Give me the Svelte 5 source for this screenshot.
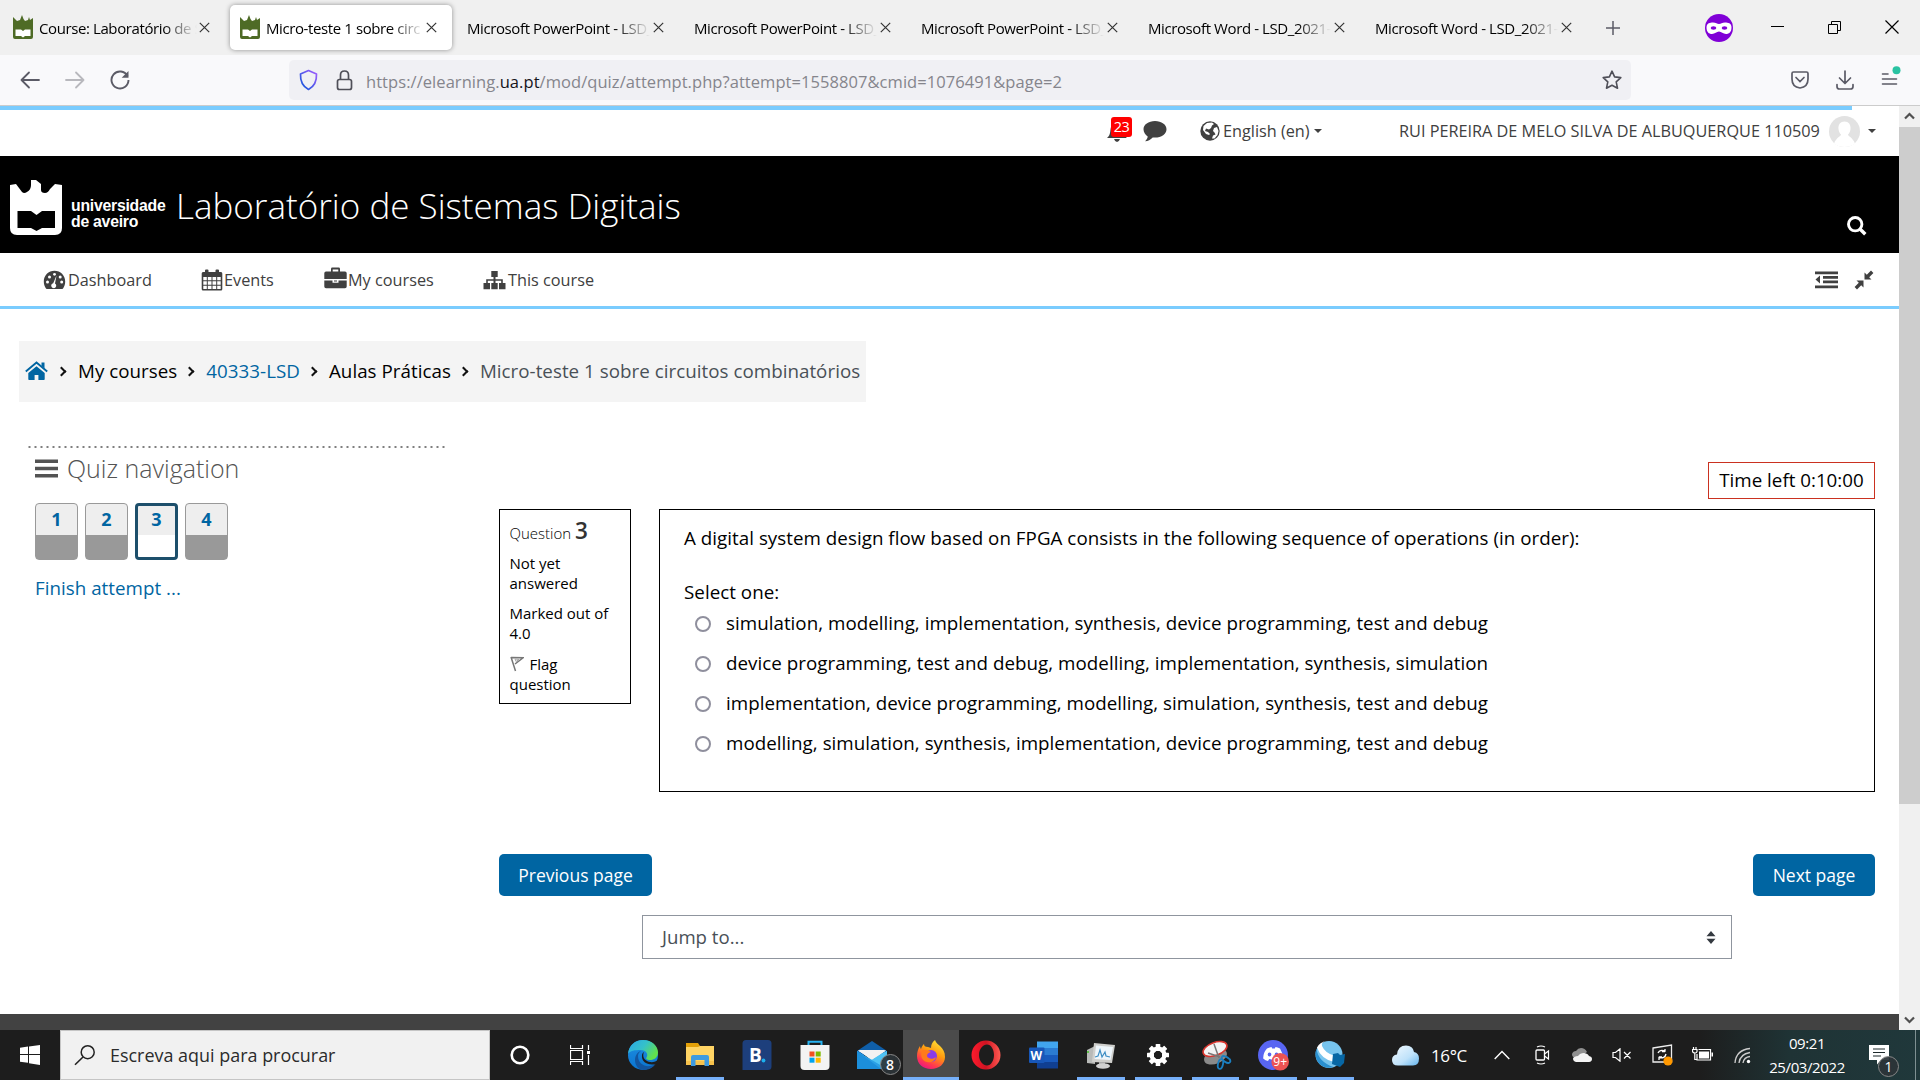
<script>
  const tabs = [
    { title: 'Course: Laboratório de S', fav: true },
    { title: 'Micro-teste 1 sobre circ', fav: true, active: true },
    { title: 'Microsoft PowerPoint - LSD_' },
    { title: 'Microsoft PowerPoint - LSD_' },
    { title: 'Microsoft PowerPoint - LSD_' },
    { title: 'Microsoft Word - LSD_2021-' },
    { title: 'Microsoft Word - LSD_2021-' }
  ];
  const options = [
    'simulation, modelling, implementation, synthesis, device programming, test and debug',
    'device programming, test and debug, modelling, implementation, synthesis, simulation',
    'implementation, device programming, modelling, simulation, synthesis, test and debug',
    'modelling, simulation, synthesis, implementation, device programming, test and debug'
  ];
  const pages = [1, 2, 3, 4];
  const current = 3;
  const apps = [
    { id: 'edge' }, { id: 'explorer', open: true }, { id: 'booking' }, { id: 'store' }, { id: 'mail' },
    { id: 'firefox', open: true, active: true }, { id: 'opera' }, { id: 'word' }, { id: 'monitor', open: true },
    { id: 'gear', open: true }, { id: 'snip', open: true }, { id: 'discord', open: true }, { id: 'thunder', open: true }
  ];
  const teeth = [0, 45, 90, 135, 180, 225, 270, 315];
</script>

{#snippet close()}
  <svg class="x" width="11" height="11" viewBox="0 0 11 11"><path d="M.8.8l9.4 9.4M10.2.8L.8 10.2" stroke="#333" stroke-width="1.2" fill="none" /></svg>
{/snippet}

{#snippet appIcon(id)}
  <svg width="32" height="32" viewBox="0 0 32 32">
    {#if id === 'edge'}
      <defs>
        <linearGradient id="eg1" x1="0" y1="0" x2="1" y2=".5"><stop offset="0" stop-color="#2aa7e8" /><stop offset=".55" stop-color="#35c1c9" /><stop offset="1" stop-color="#62e04c" /></linearGradient>
        <linearGradient id="eg2" x1="0" y1="0" x2="0" y2="1"><stop offset="0" stop-color="#1f8fe0" /><stop offset="1" stop-color="#0a74d0" /></linearGradient>
      </defs>
      <circle cx="16" cy="16" r="15" fill="url(#eg2)" />
      <path d="M1 15C2 6 8 1 16 1c9 0 15 6 15 12.500 0 5-4 7.500-8 7.500-3 0-4.500-1-3.500-2.500 2-3 0-7.500-6-7.500C8 11 3 11.500 1 15z" fill="url(#eg1)" />
      <path d="M11 17c0 7 6 11 12 10 3-.5 5-1.500 6-2.500C26 29 21 31 17 31 11 31 8 26 8 21c0-4 2-8 6-9-2 1-3 3-3 5z" fill="#12559f" />
      <path d="M17 13c-2 4 0 9 6 10 3 .5 6-.5 9-2.500v4l-3 .5c-8 2-15-2-14-9 .2-1.500 1-2.500 2-3z" fill="#1e1e1e" />
    {:else if id === 'explorer'}
      <path d="M2 4h12l2 3v4H2z" fill="#e3a008" /><path d="M2 8h12l2-1h14v18H2z" fill="#ffd464" />
      <path d="M2 22h28v4H2z" fill="#f7c24c" /><path d="M7 27V18q0-2 2-2h14q2 0 2 2v9h-4.500v-6h-9v6z" fill="#3f9be0" />
    {:else if id === 'booking'}
      <path d="M5 1h22q3.500 0 3.500 3.500v23q0 3.500-3.500 3.500H1.500V4.500Q1.500 1 5 1z" fill="#1d3f7c" />
      <text x="8" y="23" font-size="19" font-weight="700" fill="#fff" font-family="Open Sans, sans-serif">B</text><circle cx="22.500" cy="21.500" r="1.900" fill="#1bb0ee" />
    {:else if id === 'store'}
      <path d="M9.500 9V2.800h13V9" fill="none" stroke="#27b3f2" stroke-width="2" /><path d="M1.500 6h29v21q0 4-4 4h-21q-4 0-4-4z" fill="#f3f3f3" />
      <path d="M10.500 12.500h5v5h-5z" fill="#f25022" /><path d="M16.700 12.500h5v5h-5z" fill="#7fba00" /><path d="M10.500 18.700h5v5h-5z" fill="#00a4ef" /><path d="M16.700 18.700h5v5h-5z" fill="#ffb900" />
    {:else if id === 'mail'}
      <path d="M1 12L16 2l15 10v4H1z" fill="#0f5ea8" /><path d="M3 11h26L16 22z" fill="#f2f2f2" />
      <path d="M1 12l15 9 15-9v18H1z" fill="#2ba0e6" /><path d="M31 12v18L14 20z" fill="#4fc3f3" /><path d="M2 11.500h28L16 20.500z" fill="#f2f2f2" /><path d="M1 30V12l24 18z" fill="#1c8fdb" />
      <path d="M2 11.500h28L16 20.500z" fill="#f2f2f2" />
    {:else if id === 'firefox'}
      <defs><linearGradient id="fx" x1=".8" y1="0" x2=".3" y2="1"><stop offset="0" stop-color="#ffe83a" /><stop offset=".45" stop-color="#ff980e" /><stop offset=".8" stop-color="#ff3750" /><stop offset="1" stop-color="#eb1583" /></linearGradient></defs>
      <path d="M20 1c1 3 3 4 5 6 3 3 5 6 5 11 0 7-6 12-14 12S2 25 2 17c0-4 1-7 3-10 0 2 1 3 1 3 1-3 2-4 3-5 0 2 1 3 4 3l3 1c0-3 1-6 4-8z" fill="url(#fx)" />
      <circle cx="16" cy="17" r="6" fill="#8a3be8" /><path d="M7 11c4 0 6 0 9 2-3 1-4 2-4 4 1 3 6 4 9 1-1 4-5 6-9 5-5-1-7-6-5-12z" fill="#ff7a1c" />
    {:else if id === 'opera'}
      <defs><linearGradient id="op" x1="0" x2="1"><stop offset="0" stop-color="#ff1b2d" /><stop offset=".5" stop-color="#d01322" /><stop offset="1" stop-color="#ff5a52" /></linearGradient></defs>
      <path fill-rule="evenodd" d="M16 1.500a14.500 14.500 0 1 0 0 29 14.500 14.500 0 1 0 0-29zm1 4c4 0 7 5 7 10.500S21 26.500 17 26.500 9 22 9 16 13 5.500 17 5.500z" fill="url(#op)" />
    {:else if id === 'word'}
      <path d="M9 2.500h21v7H9z" fill="#41a5ee" /><path d="M9 9h21v7H9z" fill="#2b7cd3" /><path d="M9 16h21v7H9z" fill="#185abd" /><path d="M9 23h21v6.500H9z" fill="#103f91" />
      <rect x="1" y="8.500" width="15.500" height="15.500" rx="1" fill="#1857b8" /><text x="2.500" y="20.500" font-size="12" font-weight="700" fill="#fff" font-family="Open Sans, sans-serif">W</text>
    {:else if id === 'monitor'}
      <path d="M2 11l8-4v18l-8-1z" fill="#b8bab8" /><path d="M2 12h2v2H2z" fill="#5fc14b" /><path d="M9 4l21 2-3 18-20-1z" fill="#cfcfcc" /><path d="M11 6.500l17 1.500-2.500 13L9.500 20z" fill="#eef6fb" />
      <path d="M10 18l3-1 2-6 2 7 3-5 1 4 4 1" fill="none" stroke="#3d8ec4" stroke-width="1.200" /><path d="M14 23h6v4h-6z" fill="#aaa" /><ellipse cx="18" cy="27" rx="7" ry="2.800" fill="#d0d0d0" />
    {:else if id === 'gear'}
      {#each teeth as a}<rect x="13.700" y="5" width="4.600" height="7" rx=".6" fill="#fff" transform="rotate({a} 16 16)" />{/each}
      <circle cx="16" cy="16" r="7" fill="none" stroke="#fff" stroke-width="3" />
    {:else if id === 'snip'}
      <ellipse cx="14" cy="14" rx="12" ry="7" fill="#8b8b8b" transform="rotate(-22 14 14) translate(0 4)" />
      <ellipse cx="15" cy="10" rx="12.500" ry="6.500" fill="#f4f4f4" stroke="#d8362f" stroke-width="1.600" transform="rotate(-20 15 10)" />
      <path d="M14 5l5 14M8 14l12 4" stroke="#777" stroke-width="1.500" fill="none" />
      <ellipse cx="20.500" cy="25" rx="2.500" ry="5" fill="none" stroke="#1b7fc0" stroke-width="1.800" transform="rotate(12 20.500 25)" /><ellipse cx="26" cy="20.500" rx="2.500" ry="4.800" fill="none" stroke="#1b7fc0" stroke-width="1.800" transform="rotate(-58 26 20.500)" />
    {:else if id === 'discord'}
      <circle cx="16" cy="16" r="15" fill="#5865f2" /><path d="M10 9.500q3-1.500 4.500-1.500l.7 1.500h2.600l.7-1.500q2 0 4.500 1.500 3 4.500 2.800 10-2.300 2-4.800 2.500l-1.200-2q-3.800 1-7.600 0l-1.200 2Q8.500 21.500 6.200 19.500 6 14 10 9.500z" fill="#fff" />
      <ellipse cx="12.500" cy="15.500" rx="1.800" ry="2" fill="#5865f2" /><ellipse cx="19.500" cy="15.500" rx="1.800" ry="2" fill="#5865f2" />
      <circle cx="23.200" cy="22.800" r="8.800" fill="#ec5353" /><text x="23.200" y="27" font-size="12" fill="#fff" text-anchor="middle" font-family="Open Sans, sans-serif">9+</text>
    {:else}
      <circle cx="15" cy="15.500" r="13.500" fill="#77c4ee" />
      <path d="M2.500 10q2 13 17 18-8 2.500-14-3Q-.5 18 2.500 10z" fill="#2a90d0" />
      <path d="M3 8.500Q6 3 12 2q-5 1-4 5 3 7 12 9.500v6.500Q7 20 3 8.500z" fill="#fff" /><path d="M19 15l5-1 2 2 5-1-1 9-4 4-8-3z" fill="#0767a5" />
    {/if}
  </svg>
{/snippet}

{#snippet favicon()}
  <svg class="fav" width="20" height="24" viewBox="0 0 20 24">
    <path d="M0 2l4 4 3-1 2-5 1.500 4 1.500 2 3-1 1-3 1 3 3-2v19q0 2-2 2H2q-2 0-2-2z" fill="#4e6b26" /><path d="M2.500 14.500H8l2 1.500 2-1.500h5.500V21H12l-2 1.500L8 21H2.500z" fill="#fff" />
  </svg>
{/snippet}

<div class="screen">
  <div class="tabs">
    {#each tabs as tab}
      <div class="tab" class:active={tab.active}>
        {#if tab.fav}{@render favicon()}{/if}
        <span class="tab-title" class:short={tab.fav}>{tab.title}</span>
        {@render close()}
      </div>
    {/each}
    <svg class="plus" width="16" height="16" viewBox="0 0 16 16"><path d="M8 1v14M1 8h14" stroke="#5b5b66" stroke-width="1.500" /></svg>
    <svg class="mask" width="28" height="28" viewBox="0 0 28 28"><circle cx="14" cy="14" r="14" fill="#8000d7" /><path d="M1.500 13.500C1.500 9 5 8.500 8 8.500c3 0 4 1.500 6 1.500s3-1.500 6-1.500 6.500.5 6.500 5-2.500 6.500-5.500 6.500-4.500-2.500-7-2.500S10 20 7 20s-5.500-2-5.500-6.500z" fill="#fff" /><ellipse cx="8.500" cy="14" rx="2.800" ry="1.800" fill="#8000d7" /><ellipse cx="19.500" cy="14" rx="2.800" ry="1.800" fill="#8000d7" /></svg>
    <div class="win">
      <svg width="13" height="13" viewBox="0 0 13 13"><path d="M0 5.500h13" stroke="#000" stroke-width="1" /></svg>
      <svg width="13" height="13" viewBox="0 0 13 13"><path d="M.5 3.500h9v9h-9zM3.500 3V.500h9v9H10" fill="none" stroke="#000" /></svg>
      <svg width="14" height="14" viewBox="0 0 14 14"><path d="M.5.5l13 13M13.500.5l-13 13" stroke="#000" stroke-width="1.200" /></svg>
    </div>
  </div>

  <div class="toolbar">
    <div class="navbtns">
      <svg width="20" height="18" viewBox="0 0 20 18"><path d="M1.500 9H19M9 1.500L1.500 9 9 16.500" fill="none" stroke="#5b5b66" stroke-width="1.800" stroke-linecap="round" stroke-linejoin="round" /></svg>
      <svg width="20" height="18" viewBox="0 0 20 18"><path d="M1 9h17.500M11 1.500L18.500 9 11 16.500" fill="none" stroke="#b8b8bd" stroke-width="1.800" stroke-linecap="round" stroke-linejoin="round" /></svg>
      <svg width="20" height="20" viewBox="0 0 20 20"><path d="M17.500 6A8.500 8.500 0 1 0 18.500 10" fill="none" stroke="#5b5b66" stroke-width="1.900" /><path d="M18.500 1v6.800h-6.800z" fill="#5b5b66" /></svg>
    </div>
    <div class="url">
      <svg class="shield" width="19" height="22" viewBox="0 0 19 22"><defs><linearGradient id="sh" x1="0" y1="1" x2="1" y2="0"><stop offset="0" stop-color="#0a56d8" /><stop offset="1" stop-color="#a45cff" /></linearGradient></defs><path d="M9.500 1.500L17.500 5q.5 11-8 15.500Q1 16 1.500 5z" fill="none" stroke="url(#sh)" stroke-width="1.700" stroke-linejoin="round" /></svg>
      <svg class="lock" width="17" height="21" viewBox="0 0 17 21"><rect x="1.500" y="9.500" width="14" height="10" rx="2" fill="none" stroke="#4f4f58" stroke-width="1.700" /><path d="M4.500 9V5q0-4 4-4t4 4v4" fill="none" stroke="#4f4f58" stroke-width="1.700" /></svg>
      <span class="addr">https://elearning.<b>ua.pt</b>/mod/quiz/attempt.php?attempt=1558807&amp;cmid=1076491&amp;page=2</span>
      <svg class="star" width="20" height="20" viewBox="0 0 20 20"><path d="M10 1.200l2.600 5.700 6.200.7-4.600 4.200 1.300 6.400L10 15.200l-5.500 3 1.300-6.400L1.200 7.600l6.200-.7z" fill="none" stroke="#4f4f58" stroke-width="1.600" stroke-linejoin="round" /></svg>
    </div>
    <div class="tools">
      <svg width="18" height="18" viewBox="0 0 18 18"><path d="M2.500 1h13Q17 1 17 2.500V8q0 8-8 9-8-1-8-9V2.500Q1 1 2.500 1z" fill="none" stroke="#5b5b66" stroke-width="1.700" /><path d="M5 6.500l4 4 4-4" fill="none" stroke="#5b5b66" stroke-width="1.700" stroke-linecap="round" /></svg>
      <svg width="18" height="20" viewBox="0 0 18 20"><path d="M9 1v12M3.500 8L9 13.500 14.500 8M1 14.500v2Q1 19 3.500 19h11q2.500 0 2.500-2.500v-2" fill="none" stroke="#5b5b66" stroke-width="1.700" stroke-linecap="round" stroke-linejoin="round" /></svg>
      <svg width="20" height="20" viewBox="0 0 20 20"><path d="M1.500 8H7M1.500 13h14M1.500 18h14" stroke="#5b5b66" stroke-width="1.600" stroke-linecap="round" /><circle cx="15.500" cy="4.200" r="4" fill="#2ac3a2" /></svg>
    </div>
  </div>

  <div class="page">
    <div class="content">
      <div class="loading"></div>
      <div class="userbar">
        <span class="bell"><svg width="24" height="20" viewBox="0 0 24 20"><path d="M0 16c4-3 3-8 4-11 1-2 3-3 5-3s5 1 6 4c1 4 1 7 5 10z" fill="#404040" /><path d="M7 17h6q-1 3-3 3t-3-3z" fill="#404040" /></svg><span class="count">23</span></span>
        <svg class="chat" width="24" height="21" viewBox="0 0 24 21"><path d="M12 0c6.500 0 11.500 3.600 11.500 8.300S18.500 16.600 12 16.600l-2.300-.2C7.500 18.800 5 20 2 20.300c1.500-1.500 2.500-2.800 2.700-4.800C2.200 14 .5 11 .5 8.300.5 3.600 5.500 0 12 0z" fill="#404040" /></svg>
        <span class="lang"><svg width="20" height="20" viewBox="0 0 20 20"><circle cx="10" cy="10" r="9.700" fill="#404040" /><path d="M3.500 5L7 2l5-.5 2 1.500-2 1.500-1 2.500-2 1.500-3-1-1 2.500 3 1 2 2-1 1-3-1-3-4zM14 7l3-1 1.500 4-1 4-3 3.500-2.500 0 1-3 2.500-1-1-2-1.500-1.500z" fill="#fff" /></svg>English (en)<i class="caret"></i></span>
        <span class="user">RUI PEREIRA DE MELO SILVA DE ALBUQUERQUE 110509</span>
        <svg class="avatar" width="31" height="31" viewBox="0 0 31 31"><circle cx="15.500" cy="15.500" r="15.500" fill="#e2e2e2" /><path d="M15.500 5.500c4 0 6.500 3 6 7.500-.3 3-1.500 4.500-2.500 5.500 0 2 4.500 2.500 7 9q-4.500 3.500-10.500 3.500T5 27.500c2.500-6.500 7-7 7-9-1-1-2.200-2.500-2.500-5.500-.5-4.500 2-7.500 6-7.500z" fill="#fff" /></svg>
        <i class="caret"></i>
      </div>

      <div class="header">
        <svg class="logo" width="53" height="55" viewBox="0 0 53 55"><path d="M0 5L6 4l6 8q2 2 5 0 4-2 4-7V0h5l5 4v6q0 3 4 3 3 0 5-4l5-5 7 1v43q0 7-7 7H7q-7 0-7-7z" fill="#fff" /><path d="M7.500 31H21l5.500 4 5.500-4h13v17H32l-5.500 3-5.500-3H7.500z" fill="#000" /></svg>
        <div class="logotext">universidade<br />de aveiro</div>
        <h1>Laboratório de Sistemas Digitais</h1>
        <svg class="search" width="20" height="20" viewBox="0 0 20 20"><circle cx="8.200" cy="8.200" r="6.700" fill="none" stroke="#fff" stroke-width="2.900" /><path d="M13 13l5.300 5.300" stroke="#fff" stroke-width="3.400" /></svg>
      </div>

      <div class="menu">
        <span class="m1"><svg width="23" height="20" viewBox="0 0 23 20"><path d="M11.500.8C5.500.8.8 5.500.8 11.500c0 2.800.8 4.800 2 6.800.2.400.6.700 1 .7h15.400c.4 0 .8-.3 1-.7 1.200-2 2-4 2-6.800 0-6-4.700-10.700-10.700-10.700z" fill="#404040" /><path d="M13.500 5.500L12 13.500a2.500 2.500 0 1 1-1.800-.3z" fill="#fff" /><circle cx="4.500" cy="12" r="1.500" fill="#fff" /><circle cx="6.500" cy="7" r="1.500" fill="#fff" /><circle cx="11.500" cy="4.300" r="1.400" fill="#fff" /><circle cx="17.200" cy="7" r="1.500" fill="#fff" /><circle cx="18.700" cy="12" r="1.500" fill="#fff" /></svg>Dashboard</span>
        <span class="m2"><svg width="22" height="22" viewBox="0 0 22 22"><path fill-rule="evenodd" d="M2 3h2V1.500Q4 .5 5 .5h1.500q1 0 1 1V3h7V1.500q0-1 1-1H17q1 0 1 1V3h2q1.300 0 1.300 1.500V20q0 1.500-1.300 1.500H2Q.7 21.500.7 20V4.500Q.7 3 2 3zM2.300 8v3.200h3.500V8zm4.500 0v3.200h3.700V8zm4.700 0v3.200h3.700V8zm4.700 0v3.200h3.500V8zM2.300 12.200v3.500h3.500v-3.500zm4.500 0v3.500h3.700v-3.500zm4.700 0v3.500h3.700v-3.500zm4.700 0v3.500h3.500v-3.500zM2.300 16.700V20h3.500v-3.300zm4.500 0V20h3.700v-3.300zm4.700 0V20h3.700v-3.300zm4.700 0V20h3.500v-3.300z" fill="#404040" /></svg>Events</span>
        <span class="m3"><svg width="23" height="22" viewBox="0 0 23 20" preserveAspectRatio="none"><path fill-rule="evenodd" d="M7 4V1.800Q7 .5 8.300.5h6.400Q16 .5 16 1.800V4h5q1.700 0 1.700 1.700V11H.3V5.700Q.3 4 2 4zm1.700 0h5.600V2.200H8.700zM.3 12.200h8.200v2.200h6v-2.200h8.200v5.500q0 1.600-1.700 1.600H2q-1.700 0-1.700-1.600zm9.700 0h3v1H10z" fill="#404040" /></svg>My courses</span>
        <span class="m4"><svg width="23" height="20" viewBox="0 0 23 20"><path d="M8.300 1h6.400v6h-2.200v2.200h7.300V13h2.700v6.200h-6.500V13h2.200v-2.200h-5.700V13h2.200v6.200H8.300V13h2.200v-2.200H4.800V13H7v6.200H.5V13h2.700V9.200h7.300V7H8.300z" fill="#404040" /></svg>This course</span>
        <div class="menuright">
          <svg width="23" height="18" viewBox="0 0 23 18"><path d="M0 .5h23v2.700H0zM8 5h15v2.700H8zM8 9.500h15v2.700H8zM0 14.500h23v2.700H0zM5 4.500v8L.5 8.500z" fill="#404040" /></svg>
          <svg width="20" height="20" viewBox="0 0 20 20"><path d="M10.500 9.500V2.500l2.300 2.300L17 .6 19.400 3l-4.200 4.200 2.300 2.300zM9.500 10.500v7l-2.300-2.300L3 19.400.6 17l4.200-4.200-2.300-2.300z" fill="#404040" /></svg>
        </div>
      </div>

      <div class="crumbs">
        <svg width="23" height="20" viewBox="0 0 23 20"><path d="M11.500 5.200L3.300 12v6.200q0 .8.800.8h5.500v-5h3.800v5h5.500q.8 0 .8-.8V12z" fill="#0065a2" /><path d="M.8 10.500L11.500 1.600 22.200 10.500" fill="none" stroke="#0065a2" stroke-width="1.900" /><path d="M16.500 1.500h3v6l-3-2.500z" fill="#0065a2" /></svg>
        <i class="sep"></i><span>My courses</span><i class="sep"></i><span class="link">40333-LSD</span><i class="sep"></i><span>Aulas Práticas</span><i class="sep"></i><span class="dim">Micro-teste 1 sobre circuitos combinatórios</span>
      </div>

      <div class="main">
        <aside>
          <svg class="dots" width="419" height="2"><path d="M.5 1H419" stroke="#555" stroke-width="1.300" stroke-dasharray="2 4" /></svg>
          <h2><svg width="23" height="19" viewBox="0 0 23 19"><path d="M0 2.200h23M0 9.500h23M0 16.700h23" stroke="#535353" stroke-width="3.600" /></svg>Quiz navigation</h2>
          <div class="boxes">
            {#each pages as p}<div class="qbtn" class:this={p === current}><span>{p}</span></div>{/each}
          </div>
          <div class="finish">Finish attempt ...</div>
        </aside>
        <section>
          <div class="timer">Time left 0:10:00</div>
          <div class="question">
            <div class="info">
              <div class="qno">Question <b>3</b></div>
              <p>Not yet<br />answered</p>
              <p>Marked out of<br />4.0</p>
              <p class="flag"><svg width="14" height="16" viewBox="0 0 14 16"><path d="M1 1l4.500 14M1.500 1.500L13 1.800 5 8" fill="none" stroke="#777" stroke-width="1.500" /><path d="M5 3l4 .5-3 2z" fill="none" stroke="#aaa" /></svg>Flag<br />question</p>
            </div>
            <div class="formulation">
              <div class="qtext">A digital system design flow based on FPGA consists in the following sequence of operations (in order):</div>
              <div class="select">Select one:</div>
              {#each options as o}<div class="opt"><i class="radio"></i><span>{o}</span></div>{/each}
            </div>
          </div>
          <div class="buttons"><span class="btn prev">Previous page</span><span class="btn next">Next page</span></div>
          <div class="jump"><span>Jump to...</span><svg width="10" height="13" viewBox="0 0 10 13"><path d="M5 0l4.500 5.200h-9zM5 13L.5 7.800h9z" fill="#343a40" /></svg></div>
        </section>
      </div>
      <div class="footer"></div>
    </div>
    <div class="scroll">
      <svg width="11" height="8" viewBox="0 0 11 8"><path d="M1 6.500L5.500 2 10 6.500" fill="none" stroke="#505050" stroke-width="2.200" /></svg>
      <div class="thumb"></div>
      <svg class="down" width="11" height="8" viewBox="0 0 11 8"><path d="M1 1.500L5.500 6 10 1.500" fill="none" stroke="#505050" stroke-width="2.200" /></svg>
    </div>
  </div>

  <div class="taskbar">
    <div class="start"><svg width="20" height="20" viewBox="0 0 20 20"><path d="M0 2.700l8-1.100V9H0zM9 1.400L20 0v9H9zM0 10h8v7.800l-8-1.100zM9 10h11v10L9 18.300z" fill="#fff" /></svg></div>
    <div class="find"><svg width="22" height="22" viewBox="0 0 22 22"><circle cx="13.700" cy="8.200" r="6.500" fill="none" stroke="#222" stroke-width="1.500" /><path d="M9 13L1 20.800" stroke="#222" stroke-width="1.600" /></svg><span>Escreva aqui para procurar</span></div>
    <div class="wide"><svg width="20" height="20" viewBox="0 0 20 20"><circle cx="10" cy="10" r="8.300" fill="none" stroke="#fff" stroke-width="2.600" /></svg></div>
    <div class="wide"><svg width="20" height="20" viewBox="0 0 20 20"><path d="M.5 0v3.500h12V0M.5 20v-3.500h12V20M.5 5.500h12v9H.5zM18.500 0v5M18.500 10v10" fill="none" stroke="#fff" stroke-width="1.200" /><path d="M17 6h3v3h-3z" fill="#fff" /></svg></div>
    <div class="apps">
      {#each apps as a}
        <div class="app" class:open={a.open} class:on={a.active}>{@render appIcon(a.id)}{#if a.id === 'mail'}<span class="badge">8</span>{/if}</div>
      {/each}
    </div>
    <svg class="weather" width="27" height="21" viewBox="0 0 27 21"><defs><linearGradient id="wc" x1="0" y1="0" x2="1" y2="1"><stop offset="0" stop-color="#f3faff" /><stop offset=".6" stop-color="#bfe2fa" /><stop offset="1" stop-color="#65b4ec" /></linearGradient></defs><path d="M6 20.500q-6 0-6-5.500 0-5 5-5.500Q6 .5 14 .5q7 0 8 6.500 5 1 5 6.500 0 7-6 7z" fill="url(#wc)" /></svg>
    <span class="temp">16°C</span>
    <div class="tray">
      <svg width="16" height="10" viewBox="0 0 16 10"><path d="M.7 9L8 1.500 15.300 9" fill="none" stroke="#fff" stroke-width="1.400" /></svg>
      <svg width="16" height="20" viewBox="0 0 16 20"><rect x="2" y="5" width="8.500" height="10" rx="1" fill="none" stroke="#fff" stroke-width="1.300" /><path d="M10.500 9L14.500 6v8l-4-3M3 2q4-2 8 0M3 18q4 2 8 0" fill="none" stroke="#fff" stroke-width="1.200" /></svg>
      <svg width="20" height="14" viewBox="0 0 20 14"><path d="M3 10q-3-1-3-4 1-3 4-3 2-3 5-3 4 0 6 4L7 10z" fill="#8f8f8f" /><path d="M4 14q-3-1-3-3.500Q2 8 6 8q2-3 6-3 4 .5 5 3 3 .5 3 3t-3 3z" fill="#f4f4f4" /></svg>
      <svg width="20" height="14" viewBox="0 0 20 14"><path d="M1 4.500h2.500L8 .8v12.400L3.500 9.500H1zM12 4l6.500 6.500M18.500 4L12 10.500" fill="none" stroke="#fff" stroke-width="1.200" /></svg>
      <svg width="21" height="22" viewBox="0 0 21 22"><path d="M1 4l18.500-3v17L1 18z" fill="none" stroke="#eee" stroke-width="1.300" /><path d="M6 9q2-4 7-2V5M13 7.500h-3M14 10q-1 5-7 3.500V16M7 13h3" fill="none" stroke="#fff" stroke-width="1.300" /><circle cx="16" cy="17" r="4.600" fill="#ff9800" /></svg>
      <svg width="21" height="16" viewBox="0 0 21 16"><path d="M1.500 0v2.500M4 0v2.500M.5 2.500h4.500v2q0 1.500-2 1.500t-2.500-1.500zM2.800 6v6.500H5M6.500 2.500h12v10.500H5V7" fill="none" stroke="#fff" stroke-width="1.200" /><path d="M7 4.500h10v7H7zM19.500 5.500H21v4h-1.500z" fill="#fff" /></svg>
      <svg width="17" height="17" viewBox="0 0 17 17"><path d="M1 16Q2 3 16 1.500M5 16Q6 7 16 5.500M9 16q1-6 7-6.500" fill="none" stroke="#ccc" stroke-width="1.300" /><circle cx="14.500" cy="14.500" r="1.700" fill="#fff" /></svg>
    </div>
    <div class="clock"><span>09:21</span><span>25/03/2022</span></div>
    <div class="notes"><svg width="20" height="20" viewBox="0 0 20 20"><path d="M0 0h20v15h-8l-4 4.500V15H0z" fill="#fff" /><path d="M4 4h12M4 7.500h12M4 11h8" stroke="#1e2a2c" stroke-width="1.200" /></svg><span class="badge">1</span></div>
  </div>
</div>

<style>
  :global(body) { overflow: hidden; background: #fff; }
  .screen { width: 1920px; height: 1080px; display: flex; flex-direction: column; overflow: hidden; font-family: 'Open Sans', sans-serif; color: #000; white-space: nowrap; }
  .screen *, .screen { box-sizing: border-box; }
  svg { display: block; flex: none; }
  i { font-style: normal; flex: none; }

  .tabs { height: 55px; background: #f0f0f0; display: flex; align-items: center; padding-left: 3px; flex: none; }
  .tab { width: 222px; height: 45px; margin-right: 5px; padding: 0 15px 0 10px; display: flex; align-items: center; border-radius: 5px; flex: none; font-size: 15px; letter-spacing: -.4px; }
  .tab.active { background: #fff; box-shadow: 0 0 5px rgba(0, 0, 0, .4); }
  .fav { margin: -2px 6px 0 0; }
  .tab-title { flex: 1; min-width: 0; mask-image: linear-gradient(90deg, #000 calc(100% - 34px), transparent); }
  .x { margin-left: 3px; }
  .short + .x { margin-left: 2px; }
  .plus { margin-left: 13px; }
  .mask { margin-left: 84px; }
  .win { display: flex; align-items: center; gap: 44px; margin-left: 38px; margin-top: -1px; }

  .toolbar { height: 51px; flex: none; background: #f9f9fb; border-bottom: 1px solid #ccc; display: flex; align-items: center; }
  .navbtns { display: flex; align-items: center; gap: 25px; padding-left: 20px; width: 289px; flex: none; }
  .url { width: 1342px; height: 40px; border-radius: 5px; background: #f0f0f4; display: flex; align-items: center; flex: none; }
  .shield { margin-left: 10px; }
  .lock { margin-left: 18px; }
  .addr { margin-left: 13px; flex: 1; font-size: 16.500px; letter-spacing: .06px; color: #85858c; padding-top: 3px; }
  .addr b { font-weight: 400; color: #15141a; }
  .star { margin-right: 9px; }
  .tools { display: flex; align-items: center; margin-left: 160px; gap: 27px; }
  .tools svg:last-child { margin-top: -8px; }

  .page { height: 924px; flex: none; display: flex; }
  .content { width: 1899px; display: flex; flex-direction: column; }
  .loading { width: 1852px; height: 4px; background: #7accfe; flex: none; }
  .userbar { height: 46px; flex: none; display: flex; align-items: center; font-size: 16.250px; color: #404040; padding: 0 23px 4px 1107px; }
  .bell { position: relative; width: 25px; height: 22px; display: flex; align-items: flex-end; }
  .count { position: absolute; left: 4px; top: -3px; width: 21px; height: 20px; background: #f00; color: #fff; border-radius: 3px; font-size: 14.500px; letter-spacing: -.5px; line-height: 20px; text-align: center; }
  .chat { margin-left: 11px; }
  .lang { display: flex; align-items: center; margin-left: 33px; width: 199px; }
  .lang svg { margin-right: 3px; }
  .caret { border: 4px solid transparent; border-top-color: #404040; border-bottom: 0; margin-left: 4px; }
  .user { flex: 1; }
  .avatar { margin-right: 4px; }

  .header { height: 97px; flex: none; background: #000; color: #fff; display: flex; align-items: center; padding-left: 10px; }
  .logo { margin-top: 5px; }
  .logotext { font: 700 15.800px/16px 'Liberation Sans', sans-serif; margin: 19px 0 0 8px; width: 105px; letter-spacing: -.25px; flex: none; }
  h1 { font-size: 35px; font-weight: 300; margin: 3px 0 0; line-height: 50px; flex: 1; }
  .search { margin: 43px 32px 0 0; }

  .menu { height: 56px; flex: none; border-bottom: 3px solid #7accfe; display: flex; align-items: center; font-size: 16.250px; color: #404040; padding-left: 43px; }
  .menu span { display: flex; align-items: center; gap: 2px; }
  .m1 { width: 158px; }
  .m2 { width: 123px; }
  .m3 { width: 159px; }
  .menu .m3 { gap: 1px; }
  .menu .m2 { gap: 1px; }
  .m3 svg { margin-top: -4px; }
  .menuright { margin-left: auto; padding-right: 25px; display: flex; align-items: center; gap: 16px; }

  .crumbs { width: 847px; height: 61px; flex: none; margin: 32px 0 0 19px; background: #f4f4f4; display: flex; align-items: center; font-size: 18.750px; letter-spacing: .035px; padding: 0 0 2px 6px; }
  .sep { width: 7px; height: 7px; border: solid #111; border-width: 2px 2px 0 0; transform: rotate(45deg); margin: 2px 13px 0 9px; }
  .crumbs svg + .sep { margin-left: 10px; }
  .link { color: #0065a2; }
  .dim { color: #495057; }

  .main { display: flex; height: 612px; flex: none; }
  aside { width: 499px; flex: none; padding: 44px 0 0 28px; }
  h2 { display: flex; align-items: center; gap: 9px; margin: 3px 0 0 7px; font-size: 25px; font-weight: 300; color: #535353; line-height: 34px; }
  .boxes { display: flex; gap: 7px; margin: 18px 0 0 7px; }
  .qbtn { width: 43px; height: 57px; border: 1px solid #999; border-radius: 4px; background: linear-gradient(#eee 31px, #999 31px); text-align: center; font-size: 18px; line-height: 30px; font-weight: 700; color: #0065a2; }
  .qbtn.this { border: 3px solid #1d4f6b; background: linear-gradient(#eee 29px, #fff 29px); line-height: 26px; }
  .finish { margin: 15px 0 0 7px; font-size: 18.750px; letter-spacing: .03px; color: #0065a2; line-height: 26px; }

  section { width: 1376px; padding-top: 60px; display: flex; flex-direction: column; }
  .timer { align-self: flex-end; width: 167px; height: 37px; border: 1px solid #ca3120; font-size: 18.750px; text-align: center; line-height: 33px; }
  .question { display: flex; align-items: flex-start; gap: 28px; margin-top: 10px; height: 283px; }
  .info { width: 132px; height: 195px; border: 1px solid #000; padding: 7px 0 0 9.500px; font-size: 15px; line-height: 20px; }
  .qno { font-weight: 300; height: 36px; line-height: 28px; }
  .qno b { font-size: 22.500px; font-weight: 600; color: #333; }
  .info p { margin: 0 0 10px; }
  .info .flag { margin-top: 11px; }
  .flag svg { display: inline-block; margin: 0 6px -2px 0; }
  .formulation { width: 1216px; height: 283px; border: 1px solid #000; padding: 13px 0 0 24px; font-size: 18.750px; letter-spacing: .035px; line-height: 30px; }
  .select { margin-top: 24px; }
  .opt { display: flex; align-items: center; height: 40px; padding-left: 11px; gap: 15px; }
  .select + .opt { margin-top: -4px; }
  .radio { width: 16px; height: 16px; border: 2px solid #8f8f9d; border-radius: 50%; margin-top: 2px; }
  .buttons { display: flex; justify-content: space-between; margin-top: 62px; }
  .btn { height: 42px; border-radius: 5px; background: #0065a2; color: #fff; font-size: 17.500px; line-height: 42px; text-align: center; }
  .prev { width: 153px; }
  .next { width: 122px; }
  .jump { width: 1090px; height: 44px; margin: 19px 0 0 143px; border: 1px solid #8f959e; display: flex; align-items: center; justify-content: space-between; padding: 0 15px 0 19px; font-size: 18.600px; color: #495057; }
  .jump span { margin-top: -2px; }
  .footer { height: 16px; background: #424242; flex: none; }

  .scroll { width: 21px; background: #f0f0f0; display: flex; flex-direction: column; align-items: center; padding: 6px 0; }
  .thumb { width: 21px; height: 677px; margin-top: 7px; background: #cdcdcd; }
  .down { margin-top: auto; }

  .taskbar { height: 50px; flex: none; display: flex; align-items: center; color: #fff; background: linear-gradient(90deg, #1d1d1d 0, #1d1d1d 1700px, #1f3335 1790px, #20383b 1920px); }
  .taskbar > * { flex: none; }
  .start { width: 60px; display: flex; justify-content: center; }
  .find { width: 430px; height: 50px; background: #f1f1f1; border: 1px solid #c5c5c5; color: #2b2b2b; display: flex; align-items: center; gap: 14px; padding-left: 13px; font-size: 17.950px; }
  .wide { width: 60px; display: flex; justify-content: center; }
  .apps { width: 745px; margin-left: 4px; display: grid; grid-template-columns: repeat(13, 1fr); height: 50px; }
  .app { display: flex; align-items: center; justify-content: center; position: relative; border-bottom: 3px solid transparent; padding-top: 3px; margin: 0 5px; }
  .app.open { border-bottom-color: #76b0fa; }
  .app.on { background: #4b4b4b; margin: 0 -1px 0 2px; border-bottom-color: #76b0fa; }
  .badge { position: absolute; width: 21px; height: 21px; border-radius: 50%; border: 1px solid #888; background: rgba(45, 52, 56, .92); font-size: 14px; line-height: 19px; text-align: center; font-weight: 600; right: -5px; top: 24px; }
  .weather { margin-left: 33px; }
  .temp { margin: 1px 0 0 12px; width: 51px; font-size: 17px; letter-spacing: -.4px; }
  .tray { display: grid; grid-template-columns: repeat(7, 40px); align-items: center; justify-items: center; }
  .clock { width: 90px; display: flex; flex-direction: column; align-items: center; font-size: 15px; line-height: 24px; letter-spacing: -.4px; margin-top: -1px; }
  .notes { position: relative; width: 47px; height: 50px; margin-left: 17px; border-right: 1px solid #7f9092; padding-top: 15px; }
  .notes .badge { left: 9px; top: 26px; font-weight: 400; }
</style>
